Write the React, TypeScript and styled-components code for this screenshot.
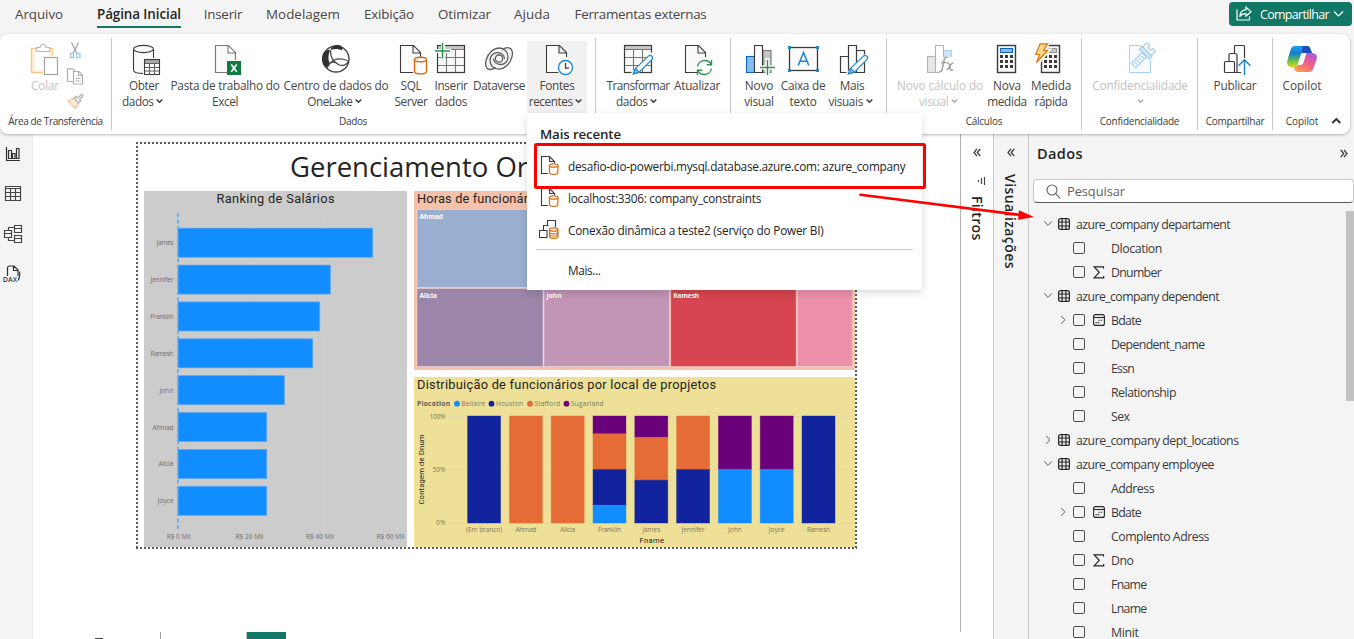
import React, { useLayoutEffect, useRef, useState } from 'react';
import styled, { createGlobalStyle, css } from 'styled-components';

const INK = '#3b3a39';
const BLUE = '#1e87cd';
const GREEN = '#117865';

const GlobalStyle = createGlobalStyle`
  * { box-sizing: border-box; }
  body { margin: 0; background: #f4f4f4; overflow: hidden; }
  svg { display: block; flex: none; }
`;

/* ---------- text that is tracked to a given width ---------- */

const Tracked = styled.span`
  display: inline-block;
  white-space: nowrap;
`;

const Fit = ({ w, children }: { w: number; children: string }) => {
  const ref = useRef<HTMLSpanElement>(null);
  const [spacing, setSpacing] = useState(0);
  useLayoutEffect(() => {
    const el = ref.current;
    if (el) setSpacing((w - el.getBoundingClientRect().width) / children.length);
  }, [w, children]);
  return (
    <Tracked ref={ref} style={{ letterSpacing: `${spacing}px` }}>
      {children}
    </Tracked>
  );
};

/* ---------- shell ---------- */

const Shell = styled.div`
  position: relative;
  width: 1354px;
  height: 639px;
  display: flex;
  flex-direction: column;
  overflow: hidden;
  background: #f4f4f4;
  color: #252423;
  font-family: 'Open Sans', 'Noto Sans', sans-serif;
  font-size: 11.6px;
`;

const MenuBar = styled.nav`
  flex: none;
  height: 34px;
  display: flex;
  align-items: flex-start;
`;

const MenuTab = styled.div<{ $w: number; $active?: boolean }>`
  width: ${(p) => p.$w}px;
  flex: none;
  display: flex;
  justify-content: center;
  font-size: 13.4px;
  line-height: 20px;
  padding-top: 4px;
  color: #484644;
  ${(p) =>
    p.$active &&
    css`
      font-weight: 600;
      color: #252423;
    `}
`;

const TabInner = styled.div<{ $active?: boolean }>`
  height: 24px;
  border-bottom: 2px solid ${(p) => (p.$active ? GREEN : 'transparent')};
`;

const ShareButton = styled.div`
  margin: 2px 2px 0 auto;
  width: 123px;
  height: 24px;
  border-radius: 4px;
  background: ${GREEN};
  color: #fff;
  display: flex;
  align-items: center;
  padding-left: 7px;
  gap: 8px;
  font-size: 12.4px;
  font-weight: 500;
`;

const ShareChevron = styled.svg`
  margin-left: -4px;
`;

const Ribbon = styled.div`
  position: relative;
  z-index: 2;
  flex: none;
  width: 1350px;
  height: 100px;
  border-radius: 8px;
  background: #fff;
  box-shadow: 0 1px 3px rgba(0, 0, 0, 0.28);
  display: flex;
`;

const Group = styled.section<{ $w: number; $pl?: number; $last?: boolean }>`
  flex: none;
  position: relative;
  width: ${(p) => p.$w}px;
  height: 92px;
  margin-top: 4px;
  padding: 3px 0 0 ${(p) => p.$pl ?? 0}px;
  border-right: 1px solid ${(p) => (p.$last ? 'transparent' : '#c8c8c8')};
  display: flex;
  flex-direction: column;
`;

const Buttons = styled.div`
  display: flex;
  height: 72px;
`;

const GroupLabel = styled.div<{ $pr?: number }>`
  height: 16px;
  line-height: 16px;
  padding-right: ${(p) => p.$pr ?? 0}px;
  font-size: 10px;
  text-align: center;
  color: #3b3a39;
`;

const RibbonButton = styled.div<{ $w: number; $ml?: number; $on?: boolean; $off?: boolean }>`
  flex: none;
  width: ${(p) => p.$w}px;
  margin-left: ${(p) => p.$ml ?? 0}px;
  padding-top: 2px;
  display: flex;
  flex-direction: column;
  align-items: center;
  background: ${(p) => (p.$on ? '#f1f1f1' : 'transparent')};
  color: ${(p) => (p.$off ? '#c3c2c1' : '#484644')};
  font-size: 11.8px;
`;

const Line = styled.div<{ $drop?: boolean }>`
  height: 16px;
  line-height: 16px;
  display: flex;
  align-items: center;
  gap: 2.5px;
  padding-right: ${(p) => (p.$drop ? 3 : 0)}px;
  white-space: nowrap;
`;

const IconGap = styled.div`
  height: 34px;
`;

const ClipTools = styled.div`
  display: flex;
  flex-direction: column;
  gap: 9px;
  padding: 1px 0 0 6px;
`;

const Collapse = styled.svg`
  margin: 82px 0 0 -1px;
`;

/* ---------- work area ---------- */

const Work = styled.main`
  flex: 1;
  display: flex;
  min-height: 0;
`;

const Rail = styled.aside`
  flex: none;
  width: 33px;
  border-right: 1px solid #ebebeb;
  display: flex;
  flex-direction: column;
`;

const Canvas = styled.div`
  flex: none;
  width: 928px;
  background: #fff;
  display: flex;
  flex-direction: column;
  padding: 8px 0 0 103px;
`;

const dots = (dir: string) =>
  `repeating-linear-gradient(to ${dir}, #5a5a5a 0 2px, transparent 2px 4px)`;

const Page = styled.div`
  width: 721px;
  height: 407px;
  padding: 8px 2px 2px 8px;
  background:
    ${dots('right')} 0 0 / 100% 2px no-repeat,
    ${dots('right')} 0 100% / 100% 2px no-repeat,
    ${dots('bottom')} 0 0 / 2px 100% no-repeat,
    ${dots('bottom')} 100% 0 / 2px 100% no-repeat;
`;

const PageTitle = styled.h1`
  margin: 0;
  height: 41px;
  padding-left: 146px;
  font-size: 27.5px;
  font-weight: 400;
  line-height: 34px;
  color: #252423;
`;

const Visuals = styled.div`
  display: grid;
  grid-template-columns: 263px 441px;
  column-gap: 7px;
`;

const VisualColumn = styled.div`
  display: flex;
  flex-direction: column;
  gap: 7px;
`;

const BottomTabs = styled.div`
  margin: auto 0 0 -103px;
  height: 7px;
  display: flex;
  align-items: flex-end;
`;

const BottomPiece = styled.div<{ $w: number; $h: number; $ml: number; $c: string }>`
  width: ${(p) => p.$w}px;
  height: ${(p) => p.$h}px;
  margin-left: ${(p) => p.$ml}px;
  background: ${(p) => p.$c};
`;

const FilterPane = styled.aside`
  flex: none;
  width: 33px;
  background: #fff;
  border-right: 1px solid #c8c8c8;
  display: flex;
  flex-direction: column;
  align-items: center;
  padding-top: 14px;
`;

const FilterEdge = styled.div`
  flex: none;
  width: 1px;
  height: 498px;
  margin-left: -1px;
  background: #b3b0ad;
`;

const VisualPane = styled(FilterPane)`
  width: 35px;
  background: #f4f4f4;
`;

const VerticalTitle = styled.div<{ $mt: number; $ls: number }>`
  writing-mode: vertical-rl;
  margin-top: ${(p) => p.$mt}px;
  font-size: 14px;
  font-weight: 600;
  line-height: 18px;
  letter-spacing: ${(p) => p.$ls}px;
`;

const VisualTitle = styled(VerticalTitle)`
  margin-right: 3px;
`;

const FilterGlyph = styled.svg`
  margin: 18px 0 0 7px;
`;

const DataPane = styled.aside`
  flex: 1;
  display: flex;
  flex-direction: column;
  padding-left: 4px;
`;

const PaneHead = styled.div`
  display: flex;
  align-items: center;
  justify-content: space-between;
  height: 39px;
  padding: 0 6px 0 4px;
  font-size: 14.5px;
  font-weight: 600;
`;

const Search = styled.div`
  margin-top: 6px;
  height: 24px;
  border: 1px solid #c8c8c8;
  border-bottom: 1px solid #605e5c;
  border-radius: 4px;
  background: #fff;
  display: flex;
  align-items: center;
  gap: 6px;
  padding-left: 12px;
  font-size: 12.8px;
  color: #605e5c;
`;

const TreeWrap = styled.div`
  display: flex;
  justify-content: space-between;
  padding-top: 8px;
  height: 436px;
`;

const Tree = styled.div`
  padding-top: 1px;
`;

const ScrollThumb = styled.div`
  width: 8px;
  height: 190px;
  background: #c2c2c2;
`;

const TreeRow = styled.div<{ $child?: boolean }>`
  height: 24px;
  display: flex;
  align-items: center;
  padding-left: ${(p) => (p.$child ? 25 : 10)}px;
  font-size: 12.3px;
  color: #3b3a39;
`;

const Slot = styled.div<{ $w: number }>`
  width: ${(p) => p.$w}px;
  flex: none;
  display: flex;
  align-items: center;
`;

const Check = styled.div`
  width: 12px;
  height: 12px;
  border: 1px solid #4d4b49;
  border-radius: 2px;
`;

/* ---------- recent sources menu ---------- */

const Menu = styled.div`
  position: absolute;
  z-index: 3;
  left: 527px;
  top: 113px;
  width: 395px;
  height: 177px;
  background: #fff;
  box-shadow: 0 3px 8px rgba(0, 0, 0, 0.15);
  padding: 12px 9px 0;
  font-size: 11.8px;
`;

const MenuTitle = styled.div`
  height: 25px;
  line-height: 19px;
  padding-left: 4px;
  font-size: 13.3px;
  font-weight: 600;
`;

const MenuItem = styled.div`
  height: 32px;
  display: flex;
  align-items: center;
  gap: 9px;
  padding-left: 3px;
`;

const MenuRule = styled.div`
  height: 1px;
  margin: 3px 0 4px;
  background: #c8c8c8;
`;

const MenuMore = styled(MenuItem)`
  padding-left: 32px;
`;

const Markup = styled.svg`
  position: absolute;
  z-index: 4;
  left: 527px;
  top: 137px;
`;

/* ---------- icons ---------- */

const Down = ({ color = INK }: { color?: string }) => (
  <svg width="7" height="6" viewBox="0 0 7 6" fill="none" stroke={color} strokeWidth="1.5">
    <path d="M.7 1.5 3.5 4.3 6.3 1.5" />
  </svg>
);

const Ico = ({ children, color = INK }: { children: React.ReactNode; color?: string }) => (
  <svg width="36" height="35" viewBox="0 0 36 35" fill="none" stroke={color} strokeWidth="1.1">
    {children}
  </svg>
);

const Doc = ({ x, d }: { x: number; d?: string }) => (
  <g transform={`translate(${x} 0)`}>
    <path
      d={d ?? 'M13 29.5H.5V2.5H13.5L20.5 9.5V14M13 2.5V10H20.5'}
      fill="#fafafa"
    />
  </g>
);

const Grid = ({ x }: { x: number }) => (
  <g>
    <rect x={x + 0.5} y="2.5" width="27" height="27" fill="#fafafa" />
    <rect x={x + 1} y="3" width="26" height="3.5" fill="#c8c6c4" stroke="none" />
    <path d={`M${x} 6.5h28M${x} 14.5h28M${x} 22.5h28M${x + 9.5} 6.5v23M${x + 18.5} 6.5v23`} stroke="#797775" />
    <rect x={x + 0.5} y="2.5" width="27" height="27" />
  </g>
);

const Pencil = ({ x, y }: { x: number; y: number }) => (
  <g transform={`translate(${x} ${y})`} stroke={BLUE} strokeWidth="1.2">
    <path d="M-5 20 19-4 22 0 1 22Z" fill="#fff" stroke="none" />
    <path d="M1.6 13.4 14.6.9q1.6-1.2 3.2.3t.2 3.2L5.2 17.2-.6 18.9Z" fill="#fff" />
    <path d="M1.6 13.4 5.2 17.2-.6 18.9Z" fill="#83beec" />
  </g>
);

const ObterIcon = () => (
  <Ico>
    <path d="M7.5 6v21c0 2 4 3.5 10 3.5V16.500h10V6" fill="#fafafa" />
    <ellipse cx="17.500" cy="6" rx="10" ry="3.600" fill="#fafafa" />
    <rect x="17" y="15" width="18" height="18" fill="#fff" stroke="none" />
    <rect x="19" y="17" width="14" height="3" fill="#a8a6a4" stroke="none" />
    <path d="M18.500 20.500h15M18.500 24.500h15M18.500 28h15M23.500 20v12M28.500 20v12" stroke="#605e5c" />
    <rect x="18.500" y="16.500" width="15" height="15" />
  </Ico>
);

const ExcelIcon = () => (
  <Ico color="#797775">
    <Doc x={8} d="M12 29.500H.5V2.500H13.500L20.500 9.500V17M13 2.500V10H20.500" />
    <rect x="20" y="18" width="14" height="14" fill="#107c41" stroke="none" />
    <path d="M24.300 21.500 29.700 28.800M29.700 21.500 24.300 28.800" stroke="#fff" strokeWidth="1.700" />
  </Ico>
);

const LakeIcon = () => (
  <Ico color="#484644">
    <circle cx="18" cy="16" r="13" fill="#fff" strokeWidth="1.400" />
    <path
      d="M12.300 7.200C7 6 3.500 11 4 17c.3 4 2.300 7 5 8 1.500-1.300 2.500-2.500 3.200-4.200C9.800 17 10 11 12.300 7.200Z"
      fill="#323130"
      stroke="none"
    />
    <path d="M12.300 7.200C13.500 3.500 17 1.500 20.500 2c3 .5 4.500 3 3.500 5.500-3.500-2-8-2-11.700-.3Z" fill="#323130" stroke="none" />
    <path d="M12.500 7.500c-.2 6 2.500 11 7.500 13.700M8.700 25.300c2.500-6.500 7-8 11.300-4.100 4.500 2.700 9 .8 10.800-3.700M12 20.500c5-6 12-5 17.500-3" strokeWidth="1.300" />
  </Ico>
);

const SqlIcon = () => (
  <Ico>
    <Doc x={7} />
    <path d="M21.500 16.500v12c0 1.400 2.500 2.400 6 2.400s6-1 6-2.400v-12" fill="#fafafa" stroke="#d8690e" strokeWidth="1.400" />
    <ellipse cx="27.500" cy="16.500" rx="6" ry="2.200" fill="#fafafa" stroke="#d8690e" strokeWidth="1.400" />
  </Ico>
);

const InsertIcon = () => (
  <Ico>
    <Grid x={4} />
    <path d="M10 0v16M2 8h16" stroke="#fff" strokeWidth="4" />
    <path d="M9.500 0v15.500M2 8h15" stroke="#1f9a4a" strokeWidth="1.500" />
  </Ico>
);

const Swirl = () => (
  <path d="M14.500 24.300c-2 1.800-4.500 2.500-6.500 2-3.500-.9-4.200-5-2.800-9.500C7.200 10 12.500 5 18.500 5c4.800 0 8.500 4 8.500 9 0 4.500-3.500 7.500-7.500 7.500-4.500 0-7-3-7-6.200" />
);

const DataverseIcon = () => (
  <Ico color="#605e5c">
    <g fill="none" strokeWidth="1.300">
      <path d="M8 26C3 25 3.500 18 7 12c3-4.500 7-7 11.500-7L28 5c5 1 4.500 8 1 14-3 4.500-7 7-11.500 7Z" fill="#f3f2f1" stroke="none" />
      <Swirl />
      <g transform="rotate(180 18 15.600)">
        <Swirl />
      </g>
      <circle cx="18" cy="15.600" r="3.600" fill="#fff" />
    </g>
  </Ico>
);

const RecentIcon = () => (
  <Ico>
    <Doc x={7} />
    <circle cx="26.500" cy="24.500" r="9" fill="#f1f1f1" stroke="none" />
    <circle cx="26.500" cy="24.500" r="7" fill="#fff" stroke={BLUE} strokeWidth="1.400" />
    <path d="M26.500 20v5.200H30" strokeWidth="1.300" />
  </Ico>
);

const TransformIcon = () => (
  <Ico>
    <Grid x={4} />
    <Pencil x={14} y={12} />
  </Ico>
);

const RefreshIcon = () => (
  <Ico>
    <Doc x={6} />
    <g stroke="#2e9150" strokeWidth="1.400">
      <path d="M18.600 23.500c.5-3.500 3.500-6 7-6 3 0 5.400 1.500 6.500 4M32.500 17v4.800h-4.800M32.400 25.500c-.5 3.500-3.500 6-7 6-3 0-5.400-1.500-6.500-4M18.500 32v-4.800h4.800" />
    </g>
  </Ico>
);

const NewVisualIcon = () => (
  <Ico>
    <rect x="22" y="7.500" width="8" height="22" fill="#c8c6c4" stroke="#797775" />
    <rect x="5.500" y="13.500" width="8" height="16" fill="#83beec" stroke="#1066b5" />
    <rect x="13.500" y="2.500" width="8" height="27" fill="#fafafa" />
    <path d="M26.500 15v18M18 24.500h17" stroke="#fff" strokeWidth="4" />
    <path d="M26.500 17v15M19 24.500h15" stroke="#2e9150" strokeWidth="1.400" />
  </Ico>
);

const TextBoxIcon = () => (
  <Ico>
    <rect x="4.500" y="4.500" width="28" height="23" fill="#fafafa" strokeWidth="1.300" />
    <path d="M13.200 22.500 18.500 9.500 23.800 22.500M15 18.300h7" stroke={BLUE} strokeWidth="1.600" />
    <g fill={BLUE} stroke="none">
      <rect x="3" y="3" width="3" height="3" />
      <rect x="31" y="3" width="3" height="3" />
      <rect x="3" y="26" width="3" height="3" />
      <rect x="31" y="26" width="3" height="3" />
    </g>
  </Ico>
);

const MoreVisualIcon = () => (
  <Ico>
    <path d="M6.500 13.500h8v16h-8zM14.500 2.500h8v27h-8zM22.500 7.500h8v22h-8z" fill="#fafafa" strokeWidth="1.200" />
    <Pencil x={15} y={12} />
  </Ico>
);

const CalcVisualIcon = () => (
  <Ico color="#b5b3b1">
    <rect x="5.500" y="13.500" width="8" height="16" fill="#e8e6e4" />
    <rect x="21.500" y="7.500" width="8" height="12" fill="#cfe5f7" stroke="#a9d0ee" />
    <rect x="13.500" y="2.500" width="8" height="27" fill="#fff" />
    <path d="M21.500 14h11v18H17.500V21Z" fill="#fff" stroke="none" />
    <g stroke="#a5a3a1">
      <path d="M25.500 14.500c-2-.8-3 .5-3.400 2.500l-2 9.500c-.4 1.800-1.300 2.500-3 2M19 19.500h5.500" strokeWidth="1.600" />
      <path d="M25 20.500c1.500-1 2.200.2 2.600 2l.8 3.500c.4 1.500 1.500 1.800 2.600.5M31.500 20c-1.500-.3-2.500 1.200-3.500 3.200s-2 3.600-3.500 3.300" strokeWidth="1.500" />
    </g>
  </Ico>
);

const Keys = ({ x }: { x: number }) => (
  <g fill={INK} stroke="none">
    {[0, 1, 2].map((r) =>
      [0, 1, 2].map((c) => <rect key={`${r}${c}`} x={x + c * 5} y={12 + r * 5} width="3" height="3" />)
    )}
  </g>
);

const MeasureIcon = () => (
  <Ico>
    <rect x="8.500" y="2.500" width="18" height="27" fill="#fafafa" strokeWidth="1.400" />
    <rect x="11.500" y="5.500" width="12" height="4" fill="#83beec" stroke="#1066b5" />
    <Keys x={11} />
  </Ico>
);

const QuickIcon = () => (
  <Ico>
    <rect x="8.500" y="2.500" width="18" height="27" fill="#fafafa" strokeWidth="1.400" />
    <rect x="13" y="5.500" width="10.500" height="4" fill="#c8c6c4" stroke="#979593" />
    <Keys x={11} />
    <path d="M7 0H15.500L11.500 7H16L5 20.500 7 12H1.500Z" fill="#fff" stroke="#fff" strokeWidth="3" />
    <path d="M7 .8H14.500L10.800 7.500H14.500L3.500 19.500 6.700 11.500H2.700Z" fill="#fbd68d" stroke="#d8780e" strokeWidth="1.200" />
  </Ico>
);

const SensIcon = () => (
  <Ico color="#a9d3ee">
    <path d="M19 2.500H7.500V29.500H28.500V17" fill="#f8fbfe" />
    <g transform="rotate(-45 18 16)" strokeWidth="1.300">
      <rect x="9" y="13" width="15" height="6" fill="#fff" />
      <path d="M12 14v4M15 14v4M18 14v4M21 14v4" />
      <path d="M24.500 8.500h4v14h-4z" fill="#cfe5f7" />
      <path d="M28.500 9.500h6v4h-3v4h3v4h-6z" fill="#fff" />
    </g>
  </Ico>
);

const PublishIcon = () => (
  <Ico>
    <path d="M17.500 10.500V3.500q0-1 1-1h8q1 0 1 1V15M17.500 10.500h-4.500q-1 0-1 1v7h4.500q1 0 1 1v10M17.500 10.500q2.500 0 2.500 1.500v17.500M12 18.500H8.500q-1 0-1 1v9q0 1 1 1H24" fill="none" strokeWidth="1.200" />
    <path d="M27.500 32V17M21.500 22.800 27.500 16.800 33.500 22.800" stroke={BLUE} strokeWidth="1.500" />
  </Ico>
);

const CopilotIcon = () => (
  <Ico>
    <defs>
      <linearGradient id="cpA" x1="0" y1="0" x2="0" y2="1">
        <stop offset="0" stopColor="#1f9bf0" />
        <stop offset=".35" stopColor="#1680d0" />
        <stop offset=".65" stopColor="#5dbb54" />
        <stop offset="1" stopColor="#e6d419" />
      </linearGradient>
      <linearGradient id="cpB" x1="1" y1="0" x2=".3" y2="1">
        <stop offset="0" stopColor="#9b5cf5" />
        <stop offset=".5" stopColor="#ec5a8e" />
        <stop offset="1" stopColor="#ff9a4d" />
      </linearGradient>
    </defs>
    <g stroke="none">
      <path d="M11 3H23c2 0 3 1.500 3.500 3.500L28 10H20c-2 0-3 1-3.500 3l-2.500 8c-.6 2-2 3.500-4.500 3.500C5 24.500 2.500 22 3.200 18L6.500 7C7.300 4.500 8.500 3 11 3Z" fill="url(#cpA)" />
      <path d="M18.500 3H23c2 0 3 1.500 3.500 3.500L28 10h-8l-2 0Z" fill="#1b4bbd" />
      <path d="M25 29H14c-2 0-3-1-3.500-3L9.500 24.500c2.500 0 4-1.500 4.500-3.500h2c2 0 3-1 3.500-3l2.300-8H27c4 0 6.500 1.500 5.800 6L29.500 25c-.8 2.500-2 4-4.500 4Z" fill="url(#cpB)" />
      <path d="M18.500 10h4l-3 9.500c-.6 1.600-1.800 2.500-3.500 2.500h-2.400l3-9.300C17 11 17.500 10 18.500 10Z" fill="#fff" />
    </g>
  </Ico>
);

const PasteIcon = () => (
  <svg width="30" height="34" viewBox="0 0 30 34" fill="none">
    <path d="M13 29.500H1.500V5.500H22.500V12" fill="#fdf3e2" stroke="#f5c88f" strokeWidth="1.500" />
    <rect x="5" y="7" width="15" height="20" fill="#fff" />
    <path d="M6.500 8.500v-4h3.500c0-4 6-4 6 0h3.500v4z" fill="#fff" stroke="#bdbbb9" strokeWidth="1.200" />
    <rect x="14.500" y="14.500" width="13" height="17" fill="#fff" stroke="#a5a3a1" strokeWidth="1.200" />
  </svg>
);

const CutIcon = () => (
  <svg width="16" height="17" viewBox="-1 0 16 17" fill="none" strokeWidth="1.300">
    <path d="M4.500.5 10 11.500M11.500.5 6 11.500" stroke="#a5a3a1" />
    <path d="M3.500 11.500H6.500V15.500H3.500zM9.500 11.500h3.500v4H9.500z" stroke="#9bcbeb" />
  </svg>
);

const CopyIcon = () => (
  <svg width="18" height="17" viewBox="0 0 18 17" fill="#fff" stroke="#b1afad" strokeWidth="1.200">
    <path d="M7 13.500H1.500V.8H6.500L9 3" />
    <path d="M7.500 3.500H13L16.500 7V16H7.500ZM12.500 3.500V7.500H16.500M9.500 10.500h5M9.500 13h5" />
  </svg>
);

const BrushIcon = () => (
  <svg width="18" height="17" viewBox="0 1 18 17" fill="none" strokeWidth="1.200">
    <path d="M2 8 8 5 12.500 10 9.500 15.500Z" fill="#fdebd3" stroke="#f3c596" />
    <path d="M8 5 10 3.200 12 5 15.500 1 17 2.500 13.500 6.500 14.800 8 12.500 10Z" fill="#fff" stroke="#b1afad" />
  </svg>
);

const DoubleChevron = ({ flip }: { flip?: boolean }) => (
  <svg width="8" height="9" viewBox="0 0 8 9" fill="none" stroke="#3b3a39" strokeWidth="1.300" transform={flip ? 'scale(-1 1)' : undefined}>
    <path d="M4 .8 1 4.500 4 8.200M7.300.8 4.300 4.500 7.300 8.200" />
  </svg>
);

const RailIcons = () => (
  <svg width="32" height="160" viewBox="0 0 32 160" fill="none" stroke="#323130" strokeWidth="1.200">
    <path d="M6.500 13V26.500H20" />
    <path d="M8.500 16.500h3v8h-3zM12.500 19.500h2.500v5h-2.500zM16.500 14.500h2.500v10h-2.500z" />
    <path d="M5.500 52.500h15v14h-15zM5.500 54.500h15M5.500 58.500h15M5.500 62.500h15M10.500 54.500v12M15.500 54.500v12" stroke="#484644" />
    <path d="M4.500 96.500h7v7h-7zM4.500 99.500h7M14.500 91.500h7v7h-7zM14.500 94.500h7M14.500 101.500h7v7h-7zM14.500 104.500h7M8.500 96v-2.500h6M8.500 104v2.500h6" stroke="#484644" />
    <path d="M7.500 142V134q0-2 2-2h4.500l4 4v6M13.500 132v4.500H18M19.500 137.500q1 5-1.500 9" />
    <text x="2.700" y="147.500" fontSize="7" fontWeight="600" fontFamily="'Open Sans', sans-serif" fill="#3b3a39" stroke="none" textLength="14.500">
      DAX
    </text>
  </svg>
);

const TableGlyph = () => (
  <svg width="12" height="12" viewBox="0 0 12 12" fill="none" stroke="#252423" strokeWidth="1.200">
    <rect x=".6" y=".6" width="10.800" height="10.800" rx="2" />
    <path d="M.6 4h10.800M.6 8h10.800M4 .6v10.800M8 .6v10.800" />
  </svg>
);

const Caret = ({ open }: { open?: boolean }) => (
  <svg width="10" height="10" viewBox="0 0 10 10" fill="none" stroke="#605e5c">
    <path d={open ? 'M1.200 2.500 5 6.300 8.800 2.500' : 'M3.200 1 7 4.800 3.200 8.600'} />
  </svg>
);

const SigmaGlyph = () => (
  <svg width="12" height="13" viewBox="0 0 12 13" fill="none" stroke="#252423" strokeWidth="1.200">
    <path d="M10.500 2.500V.8H1.200L6.300 6.300 1.200 11.800H10.700V10" />
  </svg>
);

const DateGlyph = () => (
  <svg width="12" height="12" viewBox="0 0 12 12" fill="none" stroke="#252423" strokeWidth="1.100">
    <rect x=".6" y=".6" width="10.800" height="10.800" rx="2" />
    <path d="M.6 3.500h10.800" />
    <path d="M5.500 6.300h4.500M2.500 8.600h4.500" strokeDasharray="1.200 .9" />
  </svg>
);

const SmallDb = ({ rings }: { rings?: boolean }) => (
  <g stroke="#d8690e" strokeWidth="1.200" fill="#fff">
    <path d="M10.500 9.500v7c0 1.200 2 1.900 4.200 1.900s4.200-.7 4.200-1.900v-7" />
    <ellipse cx="14.700" cy="9.500" rx="4.200" ry="1.700" />
    {rings && <path d="M10.500 12.300c0 2.200 8.400 2.200 8.400 0M10.500 14.600c0 2.200 8.400 2.200 8.400 0" fill="none" />}
  </g>
);

const DocDb = () => (
  <svg width="20" height="20" viewBox="0 0 20 20" fill="none" stroke={INK} strokeWidth="1.100">
    <path d="M9 17.500H2.500V.5H10.500L15.500 5.500V7M10.500.5V5.500H15.500" />
    <SmallDb />
  </svg>
);

const CubeDb = () => (
  <svg width="20" height="20" viewBox="0 0 20 20" fill="#fff" stroke={INK} strokeWidth="1.100">
    <path d="M8.500 6V.5H16.500V7M4.500 10V5.500H9.500M.5 10.500h7.500v7H.5z" />
    <SmallDb rings />
  </svg>
);

/* ---------- charts ---------- */

const chartFont = { fontFamily: 'Roboto, sans-serif' };
const smallFont = { fontFamily: "'Open Sans', sans-serif", fontSize: 6.6 };

const salaries: [string, number, number][] = [
  ['James', 194.7, 17],
  ['Jennifer', 152.3, 23],
  ['Franklin', 141.7, 23],
  ['Ramesh', 134.7, 23],
  ['John', 106.3, 14],
  ['Ahmad', 88.7, 21],
  ['Alicia', 88.7, 15],
  ['Joyce', 88.7, 16],
];

const SalaryChart = () => (
  <svg width="263" height="356">
    <rect width="263" height="356" fill="#ccc" />
    <text x="72.500" y="12" fontSize="12.800" fill="#252423" textLength="118" {...chartFont}>
      Ranking de Salários
    </text>
    <path d="M105.500 22V340M176.500 22V340M246.500 22V340" stroke="#c4c4c4" strokeDasharray="1 3" />
    {salaries.map(([name, width, tw], i) => {
      const y = 37.2 + i * 36.87;
      return (
        <g key={name}>
          <rect x="34" y={y} width={width} height="29" fill="#118dff" stroke="#5aa5ee" strokeWidth=".7" />
          <text x={29.5 - tw} y={y + 17} fill="#6f6d6b" textLength={tw} {...smallFont}>
            {name}
          </text>
        </g>
      );
    })}
    <path d="M34 22V339" stroke="#5ba7ee" strokeWidth="1.500" strokeDasharray="4 2.500" />
    {[0, 20, 40, 60].map((v, i) => (
      <text key={v} x={(v ? 21 : 22.7) + i * 70.5} y="348" fill="#6f6d6b" textLength={v ? 28 : 24} {...smallFont}>
        {`R$ ${v} Mil`}
      </text>
    ))}
  </svg>
);

const cells: [string, number, number, number, string, number][] = [
  ['Ahmad', 3, 18.5, 435, '#9aaed0', 23.5],
  ['Alicia', 3, 97.5, 126, '#9b85a9', 17.5],
  ['John', 130, 97.5, 125.5, '#c294b6', 15],
  ['Ramesh', 256.7, 97.5, 125.5, '#d64550', 26],
  ['', 383.3, 97.5, 55, '#ec90ac', 0],
];

const HoursTreemap = () => (
  <svg width="441" height="179">
    <rect width="441" height="179" fill="#f4c2ab" />
    <text x="3" y="12" fontSize="12.800" fill="#252423" textLength="111" {...chartFont}>
      Horas de funcionár
    </text>
    {cells.map(([name, x, y, w, color, tw]) => (
      <g key={x + name}>
        <rect x={x} y={y} width={w} height="78" fill={color} stroke="#fff" strokeOpacity=".35" />
        {name && (
          <text x={x + 2.5} y={y + 9.500} fill="#fff" fontWeight="700" textLength={tw} {...smallFont}>
            {name}
          </text>
        )}
      </g>
    ))}
  </svg>
);

const NAVY = '#12239e';
const ORANGE = '#e66c37';
const PURPLE = '#6b007b';
const SKY = '#118dff';

const stacks: { name: string; tw: number; parts: [string, number][] }[] = [
  { name: '(Em branco)', tw: 36, parts: [[NAVY, 1]] },
  { name: 'Ahmad', tw: 21, parts: [[ORANGE, 1]] },
  { name: 'Alicia', tw: 15, parts: [[ORANGE, 1]] },
  { name: 'Franklin', tw: 23, parts: [[PURPLE, 1 / 6], [ORANGE, 1 / 3], [NAVY, 1 / 3], [SKY, 1 / 6]] },
  { name: 'James', tw: 18, parts: [[PURPLE, 0.2], [ORANGE, 0.4], [NAVY, 0.4]] },
  { name: 'Jennifer', tw: 23, parts: [[ORANGE, 0.5], [NAVY, 0.5]] },
  { name: 'John', tw: 14, parts: [[PURPLE, 0.5], [SKY, 0.5]] },
  { name: 'Joyce', tw: 16, parts: [[PURPLE, 0.5], [SKY, 0.5]] },
  { name: 'Ramesh', tw: 23, parts: [[NAVY, 1]] },
];

const legend: [string, string, number, number][] = [
  ['Bellaire', SKY, 43, 24],
  ['Houston', NAVY, 77.5, 27],
  ['Stafford', ORANGE, 116, 25.5],
  ['Sugarland', PURPLE, 152.5, 32.5],
];

const LocationChart = () => (
  <svg width="441" height="170">
    <rect width="441" height="170" fill="#efe097" />
    <text x="3" y="12" fontSize="12.800" fill="#252423" textLength="299" {...chartFont}>
      Distribuição de funcionários por local de propjetos
    </text>
    <text x="3" y="29" fill="#605e5c" fontWeight="700" textLength="33" {...smallFont}>
      Plocation
    </text>
    {legend.map(([name, color, x, tw]) => (
      <g key={name}>
        <circle cx={x} cy="26.700" r="2.900" fill={color} />
        <text x={x + 4.5} y="29" fill="#7f7862" textLength={tw} {...smallFont}>
          {name}
        </text>
      </g>
    ))}
    <path d="M36 39.500H438M36 92.500H438M36 146.500H438" stroke="#d5cfae" strokeDasharray="1 3" />
    {(
      [
        ['100%', 15.5, 42, 16],
        ['50%', 18.5, 95, 13],
        ['0%', 22, 148, 9.5],
      ] as [string, number, number, number][]
    ).map(([t, x, y, tw]) => (
      <text key={t} x={x} y={y} fill="#7f7862" textLength={tw} {...smallFont}>
        {t}
      </text>
    ))}
    <text transform="translate(10 127.500) rotate(-90)" fontSize="7.600" fill="#252423" textLength="70" {...chartFont}>
      Contagem de Dnum
    </text>
    {stacks.map(({ name, tw, parts }, i) => {
      const x = 53.6 + i * 41.8;
      let top = 39;
      return (
        <g key={name}>
          {parts.map(([color, share]) => {
            const y = top;
            top += share * 107;
            return (
              <rect key={color} x={x} y={y} width="33" height={share * 107} fill={color} stroke={color} strokeOpacity=".5" strokeWidth=".8" />
            );
          })}
          <text x={x + 16.5 - tw / 2} y="155" fill="#7f7862" textLength={tw} {...smallFont}>
            {name}
          </text>
        </g>
      );
    })}
    <text x="225.500" y="166" fontSize="7.600" fill="#252423" textLength="24.500" {...chartFont}>
      Fname
    </text>
  </svg>
);

/* ---------- data ---------- */

type Node = { t: string; w: number; kind: 'table' | 'field'; open?: boolean; icon?: 'sum' | 'date' };

const nodes: Node[] = [
  { t: 'azure_company departament', w: 154, kind: 'table', open: true },
  { t: 'Dlocation', w: 51, kind: 'field' },
  { t: 'Dnumber', w: 50, kind: 'field', icon: 'sum' },
  { t: 'azure_company dependent', w: 143, kind: 'table', open: true },
  { t: 'Bdate', w: 30, kind: 'field', icon: 'date' },
  { t: 'Dependent_name', w: 93.5, kind: 'field' },
  { t: 'Essn', w: 23, kind: 'field' },
  { t: 'Relationship', w: 65, kind: 'field' },
  { t: 'Sex', w: 18.5, kind: 'field' },
  { t: 'azure_company dept_locations', w: 162.5, kind: 'table' },
  { t: 'azure_company employee', w: 138, kind: 'table', open: true },
  { t: 'Address', w: 43, kind: 'field' },
  { t: 'Bdate', w: 30, kind: 'field', icon: 'date' },
  { t: 'Complento Adress', w: 98, kind: 'field' },
  { t: 'Dno', w: 22.5, kind: 'field', icon: 'sum' },
  { t: 'Fname', w: 35.5, kind: 'field' },
  { t: 'Lname', w: 35.5, kind: 'field' },
  { t: 'Minit', w: 27.5, kind: 'field' },
];

const TreeItem = ({ node }: { node: Node }) =>
  node.kind === 'table' ? (
    <TreeRow>
      <Slot $w={15}>
        <Caret open={node.open} />
      </Slot>
      <Slot $w={18}>
        <TableGlyph />
      </Slot>
      <Fit w={node.w}>{node.t}</Fit>
    </TreeRow>
  ) : (
    <TreeRow $child>
      <Slot $w={15}>{node.icon === 'date' && <Caret />}</Slot>
      <Slot $w={20}>
        <Check />
      </Slot>
      <Slot $w={18}>
        {node.icon === 'sum' && <SigmaGlyph />}
        {node.icon === 'date' && <DateGlyph />}
      </Slot>
      <Fit w={node.w}>{node.t}</Fit>
    </TreeRow>
  );

type ButtonSpec = {
  icon: React.ReactNode;
  w: number;
  lines: [string, number][];
  drop?: boolean;
  ml?: number;
  on?: boolean;
  off?: boolean;
};

const BigButton = ({ icon, w, lines, drop, ml, on, off }: ButtonSpec) => (
  <RibbonButton $w={w} $ml={ml} $on={on} $off={off}>
    <IconGap>{icon}</IconGap>
    {lines.map(([t, tw], i) => {
      const arrow = drop && i === lines.length - 1 && lines.length > 1;
      return (
        <Line key={t} $drop={arrow}>
          <Fit w={tw}>{t}</Fit>
          {arrow && <Down color={off ? '#b1afad' : INK} />}
        </Line>
      );
    })}
    {drop && lines.length === 1 && (
      <Line>
        <Down color="#b1afad" />
      </Line>
    )}
  </RibbonButton>
);

const tabs: [string, number, number][] = [
  ['Arquivo', 78, 48],
  ['Página Inicial', 122, 84],
  ['Inserir', 46, 38.5],
  ['Modelagem', 114, 74],
  ['Exibição', 58, 50],
  ['Otimizar', 93, 53],
  ['Ajuda', 42, 36],
  ['Ferramentas externas', 175, 132],
];

export default function App() {
  return (
    <Shell>
      <GlobalStyle />
      <MenuBar>
        {tabs.map(([t, w, tw]) => (
          <MenuTab key={t} $w={w} $active={t === 'Página Inicial'}>
            <TabInner $active={t === 'Página Inicial'}>
              <Fit w={tw}>{t}</Fit>
            </TabInner>
          </MenuTab>
        ))}
        <ShareButton>
          <svg width="16" height="16" viewBox="0 0 16 16" fill="none" stroke="#fff" strokeWidth="1.200">
            <path d="M1 3.500V14h12.500V10.500" />
            <path d="M10 1.200 15 5.700 10 10.200V7.700C7 7.500 5 8.500 3.700 10.700 4 6.500 6 4 10 3.700Z" />
          </svg>
          <Fit w={69}>Compartilhar</Fit>
          <ShareChevron width="11" height="8" viewBox="0 0 11 8" fill="none" stroke="#fff" strokeWidth="1.200">
            <path d="M1 1.500 5.500 6 10 1.500" />
          </ShareChevron>
        </ShareButton>
      </MenuBar>

      <Ribbon>
        <Group $w={112}>
          <Buttons>
            <RibbonButton $w={30} $ml={30} $off>
              <PasteIcon />
              <Line>
                <Fit w={28}>Colar</Fit>
              </Line>
            </RibbonButton>
            <ClipTools>
              <CutIcon />
              <CopyIcon />
              <BrushIcon />
            </ClipTools>
          </Buttons>
          <GroupLabel>
            <Fit w={94.5}>Área de Transferência</Fit>
          </GroupLabel>
        </Group>
        <Group $w={484} $pl={5}>
          <Buttons>
            <BigButton icon={<ObterIcon />} w={54} lines={[['Obter', 30], ['dados', 31.5]]} drop />
            <BigButton icon={<ExcelIcon />} w={108} lines={[['Pasta de trabalho do', 109], ['Excel', 26]]} />
            <BigButton icon={<LakeIcon />} w={114} lines={[['Centro de dados do', 105], ['OneLake', 45]]} drop />
            <BigButton icon={<SqlIcon />} w={36} lines={[['SQL', 21], ['Server', 33]]} />
            <BigButton icon={<InsertIcon />} w={44} lines={[['Inserir', 33], ['dados', 32]]} />
            <BigButton icon={<DataverseIcon />} w={52} lines={[['Dataverse', 52]]} />
            <BigButton icon={<RecentIcon />} w={60} ml={2} lines={[['Fontes', 35], ['recentes', 44]]} drop on />
          </Buttons>
          <GroupLabel $pr={6}>
            <Fit w={28}>Dados</Fit>
          </GroupLabel>
        </Group>
        <Group $w={135} $pl={8}>
          <Buttons>
            <BigButton icon={<TransformIcon />} w={68} lines={[['Transformar', 63], ['dados', 31.5]]} drop />
            <BigButton icon={<RefreshIcon />} w={50} lines={[['Atualizar', 46]]} />
          </Buttons>
        </Group>
        <Group $w={156} $pl={9}>
          <Buttons>
            <BigButton icon={<NewVisualIcon />} w={38} lines={[['Novo', 28.5], ['visual', 29.5]]} />
            <BigButton icon={<TextBoxIcon />} w={50} lines={[['Caixa de', 44.5], ['texto', 27]]} />
            <BigButton icon={<MoreVisualIcon />} w={48} lines={[['Mais', 24.5], ['visuais', 34.5]]} drop />
          </Buttons>
        </Group>
        <Group $w={195} $pl={5}>
          <Buttons>
            <BigButton icon={<CalcVisualIcon />} w={96} lines={[['Novo cálculo do', 86], ['visual', 29.5]]} drop off />
            <BigButton icon={<MeasureIcon />} w={38} lines={[['Nova', 28], ['medida', 39.5]]} />
            <BigButton icon={<QuickIcon />} w={50} lines={[['Medida', 40], ['rápida', 33]]} />
          </Buttons>
          <GroupLabel $pr={5}>
            <Fit w={36.5}>Cálculos</Fit>
          </GroupLabel>
        </Group>
        <Group $w={116}>
          <Buttons>
            <BigButton icon={<SensIcon />} w={116} lines={[['Confidencialidade', 95.5]]} drop off />
          </Buttons>
          <GroupLabel>
            <Fit w={79.5}>Confidencialidade</Fit>
          </GroupLabel>
        </Group>
        <Group $w={75}>
          <Buttons>
            <BigButton icon={<PublishIcon />} w={74} lines={[['Publicar', 43]]} />
          </Buttons>
          <GroupLabel>
            <Fit w={58.5}>Compartilhar</Fit>
          </GroupLabel>
        </Group>
        <Group $w={59} $last>
          <Buttons>
            <BigButton icon={<CopilotIcon />} w={58} lines={[['Copilot', 39]]} />
          </Buttons>
          <GroupLabel>
            <Fit w={32.5}>Copilot</Fit>
          </GroupLabel>
        </Group>
        <Collapse width="11" height="9" viewBox="0 0 11 9" fill="none" stroke="#323130" strokeWidth="1.900">
          <path d="M1.300 7 5.300 3 9.300 7" />
        </Collapse>
      </Ribbon>

      <Work>
        <Rail>
          <RailIcons />
        </Rail>
        <Canvas>
          <Page>
            <PageTitle>
              <Fit w={238}>Gerenciamento Or</Fit>
            </PageTitle>
            <Visuals>
              <SalaryChart />
              <VisualColumn>
                <HoursTreemap />
                <LocationChart />
              </VisualColumn>
            </Visuals>
          </Page>
          <BottomTabs>
            <BottomPiece $w={8} $h={1} $ml={62} $c="#484644" />
            <BottomPiece $w={1} $h={7} $ml={57} $c="#a19f9d" />
            <BottomPiece $w={1} $h={7} $ml={85} $c="#c8c6c4" />
            <BottomPiece $w={39} $h={7} $ml={0} $c={GREEN} />
          </BottomTabs>
        </Canvas>
        <FilterEdge />
        <FilterPane>
          <DoubleChevron />
          <FilterGlyph width="10" height="12" viewBox="0 -1 10 12" fill="none" stroke="#484644" strokeWidth="1.200">
            <path d="M8.500 1v8M5.500 2v6M2.500 4v2" />
          </FilterGlyph>
          <VerticalTitle $mt={9} $ls={0.35}>
            Filtros
          </VerticalTitle>
        </FilterPane>
        <VisualPane>
          <DoubleChevron />
          <VisualTitle $mt={17} $ls={0.42}>
            Visualizações
          </VisualTitle>
        </VisualPane>
        <DataPane>
          <PaneHead>
            <Fit w={46}>Dados</Fit>
            <DoubleChevron flip />
          </PaneHead>
          <Search>
            <svg width="15" height="15" viewBox="0 0 15 15" fill="none" stroke="#605e5c" strokeWidth="1.100">
              <circle cx="6" cy="6" r="5" />
              <path d="M9.700 9.700 14.300 14.300" />
            </svg>
            <Fit w={58}>Pesquisar</Fit>
          </Search>
          <TreeWrap>
            <Tree>
              {nodes.map((n, i) => (
                <TreeItem key={i} node={n} />
              ))}
            </Tree>
            <ScrollThumb />
          </TreeWrap>
        </DataPane>
      </Work>

      <Menu>
        <MenuTitle>
          <Fit w={81}>Mais recente</Fit>
        </MenuTitle>
        <MenuItem>
          <DocDb />
          <Fit w={337.5}>desafio-dio-powerbi.mysql.database.azure.com: azure_company</Fit>
        </MenuItem>
        <MenuItem>
          <DocDb />
          <Fit w={193}>localhost:3306: company_constraints</Fit>
        </MenuItem>
        <MenuItem>
          <CubeDb />
          <Fit w={255.5}>Conexão dinâmica a teste2 (serviço do Power BI)</Fit>
        </MenuItem>
        <MenuRule />
        <MenuMore>
          <Fit w={32.5}>Mais...</Fit>
        </MenuMore>
      </Menu>

      <Markup width="520" height="90" viewBox="0 0 520 90" fill="none" stroke="#f00" strokeWidth="3">
        <rect x="8.500" y="7.500" width="389" height="43" rx="1" />
        <path d="M333.500 57.800 494 78" strokeWidth="2.600" strokeLinecap="round" />
        <path d="M492 73.300 507 80 491 82.700Z" fill="#f00" stroke="none" />
      </Markup>
    </Shell>
  );
}
